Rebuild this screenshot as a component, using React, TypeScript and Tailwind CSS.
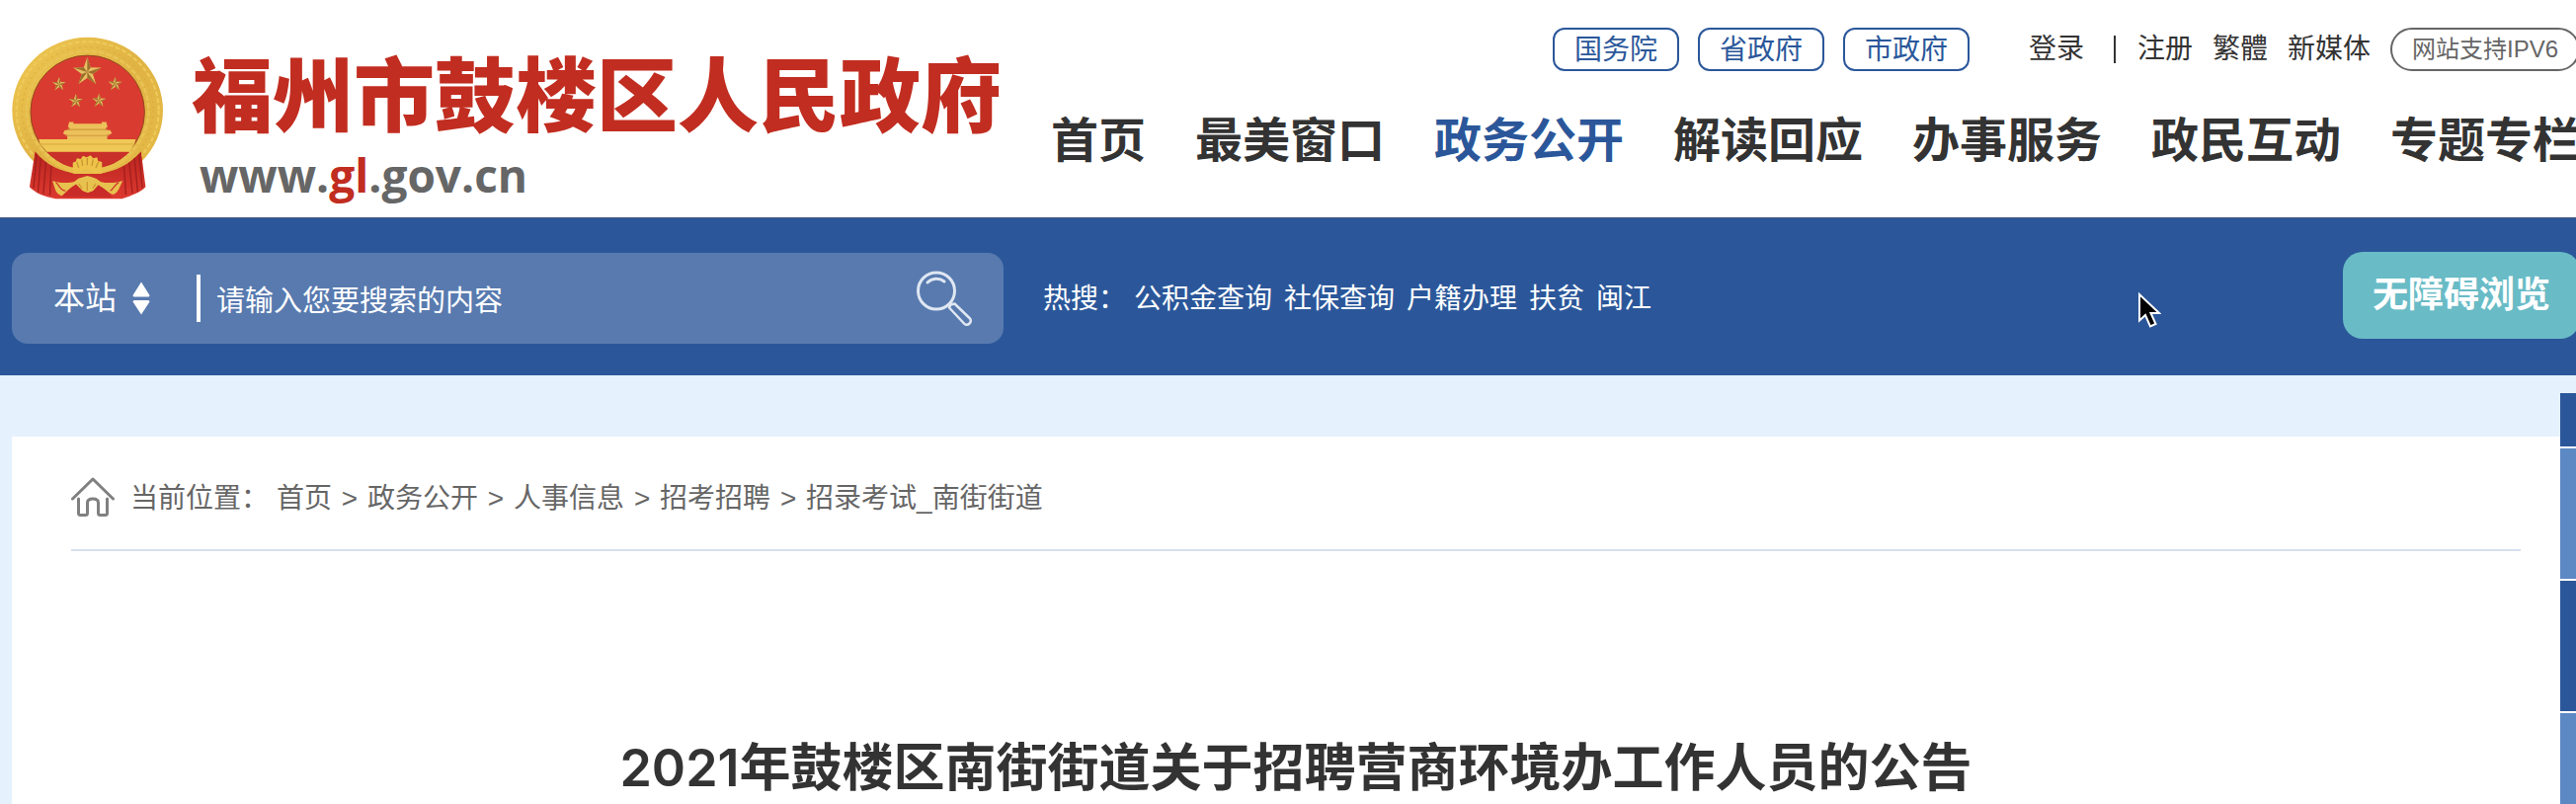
import React from "react";

const starPath = (cx: number, cy: number, r: number) =>
  Array.from({ length: 10 }, (_, i) => {
    const radius = i % 2 === 0 ? r : r * 0.4;
    const angle = -Math.PI / 2 + (i * Math.PI) / 5;
    return `${i === 0 ? "M" : "L"}${(cx + radius * Math.cos(angle)).toFixed(1)} ${(cy + radius * Math.sin(angle)).toFixed(1)}`;
  }).join("") + "Z";

const starShade = (cx: number, cy: number, r: number) =>
  Array.from({ length: 5 }, (_, i) => {
    const a = -Math.PI / 2 + (i * 2 * Math.PI) / 5;
    const b = a + Math.PI / 5;
    return `M${cx} ${cy}L${cx + r * Math.cos(a)} ${cy + r * Math.sin(a)}L${cx + r * 0.4 * Math.cos(b)} ${cy + r * 0.4 * Math.sin(b)}Z`;
  }).join("");

const stars: [number, number, number][] = [
  [266, 160, 45],
  [180, 197, 22],
  [351, 196, 22],
  [231, 248, 22],
  [302, 247, 22],
];

function Emblem() {
  return (
    <svg viewBox="36 52 464 496" className="h-[165px] w-[154px] shrink-0" aria-hidden="true">
      <defs>
        <linearGradient id="gold" x1="0" y1="0" x2="1" y2="1">
          <stop offset="0" stopColor="#efc850" />
          <stop offset="0.5" stopColor="#e0b344" />
          <stop offset="1" stopColor="#e6bb46" />
        </linearGradient>
        <linearGradient id="drape" x1="0" y1="0" x2="0" y2="1">
          <stop offset="0" stopColor="#b92320" />
          <stop offset="1" stopColor="#dd3a30" />
        </linearGradient>
      </defs>
      <ellipse cx="267" cy="277" rx="230" ry="223" fill="url(#gold)" />
      <ellipse cx="267" cy="277" rx="217" ry="210" fill="none" stroke="#efcb5c" strokeWidth="6" strokeDasharray="14 7" />
      <ellipse cx="267" cy="277" rx="200" ry="194" fill="none" stroke="#d6a83e" strokeWidth="3" strokeDasharray="6 12" />
      <ellipse cx="267" cy="277" rx="186" ry="181" fill="none" stroke="#e9c355" strokeWidth="8" strokeDasharray="18 5" />
      <ellipse cx="267" cy="282" rx="174" ry="173" fill="#da3b30" stroke="#8f4a1c" strokeWidth="3" />
      {stars.map(([x, y, r]) => (
        <g key={`${x}-${y}`}>
          <path d={starPath(x, y, r)} fill="#e6bf62" />
          <path d={starShade(x, y, r)} fill="#9c6f2c" />
        </g>
      ))}
      <path d="M211 312h13v5h86v-5h14l4 16-6 3v6h14l5 10-8 4h-6v14h-122v-14h-6l-7-4 6-10h14v-6l-5-3z" fill="#ecc05a" />
      <path d="M205 333h122v4H205zM200 352h132v3H200z" fill="#cf9a3c" />
      <path d="M118 365h296l-4 14-15 24H143l-21-24z" fill="#efc856" />
      <path d="M121 378h288v3H121z" fill="#d5a540" />
      <path d="M143 404h252c-30 28-60 44-90 52h-76c-32-9-60-25-86-52z" fill="#c9302a" />
      <path d="M107 402c32 40 74 62 130 68h60c58-6 100-30 133-68l14 108c-16 16-40 26-72 36H170c-38-6-62-18-80-36z" fill="url(#drape)" />
      <path
        d="M112 410l-10 104M124 422l-8 104M140 434l-8 98M156 446l-4 90M424 410l10 104M410 422l10 104M394 436l10 94M378 446l6 88"
        stroke="#a31f1c"
        strokeWidth="4"
        fill="none"
      />
      <path d="M125 402c26 34 60 56 102 68h80c44-12 78-36 104-68-30 26-66 42-106 50h-78c-40-8-74-24-102-50z" fill="#e9bf4c" />
      <path
        d="M222 462v-26l10-4 2-9 12 2 7-10 11 5 12-6 8 9 12-3 3 11 12 3v28l-22 6-12-9-14-4-12 4-10 9z"
        fill="#edc34a"
      />
      <path d="M240 452l-6-18M252 446l-3-20M266 444v-22M280 446l4-20M292 452l8-18" stroke="#c9962f" strokeWidth="4" />
      <path d="M160 492c30 8 52 6 66 2l14-10 14-4 12-4 14 4 14 5 14 10c20 4 42 4 66-4l-10 22c-6 12-12 20-22 20-18-12-34-24-44-26l-14 16-18 6-16-6-18-14c-12 4-26 16-44 28-12-4-16-10-20-20z" fill="#e8c24f" />
      <path d="M170 496c12 10 14 26 30 26M362 496c-14 8-18 24-26 26" stroke="#d0392d" strokeWidth="4" fill="none" />
      <path d="M190 540c10-16 26-28 42-38l20 20 16 6 16-6 16-18c18 10 32 24 42 38z" fill="#c92c28" />
      <path d="M240 500l10 14M266 494v28M292 500l-9 14" stroke="#cf9a30" strokeWidth="4" />
    </svg>
  );
}

function SearchIcon() {
  return (
    <svg viewBox="0 0 56 56" className="size-14" fill="none" stroke="#dfe7f2" strokeWidth="3" aria-hidden="true">
      <circle cx="20" cy="20.500" r="18.500" />
      <path d="M11 12a13 13 0 0 1 17-1" strokeLinecap="round" />
      <path d="M34.500 34.500l-1.500 3 15.500 16.500c3.500 2.500 8-2 5.500-5.500L38.500 33.500z" strokeLinejoin="round" strokeWidth="2.500" />
    </svg>
  );
}

function HomeIcon() {
  return (
    <svg viewBox="0 0 44 40" className="h-10 w-11 shrink-0" fill="none" stroke="#808080" strokeWidth="3" strokeLinejoin="round" strokeLinecap="round" aria-hidden="true">
      <path d="M1.500 22L22 2l20.500 20" />
      <path d="M7.500 22v14.500q0 2 2 2h5q2 0 2-2V26q0-4 5.500-4t5.500 4v10.500q0 2 2 2h5q2 0 2-2V22" />
    </svg>
  );
}

function Pointer() {
  return (
    <svg viewBox="0 0 24 38" className="absolute left-[2164px] top-[295px] h-[38px] w-6" aria-hidden="true">
      <path d="M2 3v26.500l6-5.500 5 11.500 5.500-2.500-5-11H22z" fill="#000" stroke="#fff" strokeWidth="2" />
    </svg>
  );
}

const governments = ["国务院", "省政府", "市政府"];
const menu = ["首页", "最美窗口", "政务公开", "解读回应", "办事服务", "政民互动", "专题专栏"];
const hotWords = ["公积金查询", "社保查询", "户籍办理", "扶贫", "闽江"];
const crumbs = ["首页", "政务公开", "人事信息", "招考招聘", "招录考试_南街街道"];

export default function App() {
  return (
    <div className="relative min-h-screen overflow-hidden bg-[#e6f1fe] font-['Liberation_Sans','Noto_Sans_CJK_SC',sans-serif] text-[28px] leading-10 text-[#333]">
      <header className="-mr-1 flex h-[220px] justify-between bg-white pl-3">
        <a href="#home" className="flex pt-[37px]">
          <Emblem />
          <span className="ml-7 flex flex-col">
            <span className="whitespace-nowrap font-['Noto_Sans_CJK_SC',sans-serif] text-[82px] font-black leading-[110px] text-[#c12d20]">
              福州市鼓楼区人民政府
            </span>
            <span className="pl-2 font-['Open_Sans',sans-serif] text-[46px] font-bold leading-[60px] text-[#666]">
              www.<span className="text-[#c12d20]">gl</span>.gov.cn
            </span>
          </span>
        </a>
        <div className="flex shrink-0 flex-col items-end pt-7">
          <div className="flex items-center whitespace-nowrap">
            <div className="flex gap-[19px]">
              {governments.map((name) => (
                <a key={name} href="#gov" className="flex h-11 w-32 items-center justify-center rounded-xl border-2 border-[#2b579a] pt-0.5 text-[#2b579a]">
                  {name}
                </a>
              ))}
            </div>
            <a href="#login" className="ml-[60px]">登录</a>
            <span className="mx-[30px] h-7 w-0.5 bg-[#333]" />
            <a href="#register" className="-ml-2">注册</a>
            <a href="#traditional" className="ml-5">繁體</a>
            <a href="#media" className="ml-5">新媒体</a>
            <a href="#ipv6" className="ml-5 flex h-11 w-48 items-center rounded-full border-2 border-[#666] pl-5 text-2xl text-[#666]">
              网站支持IPV6
            </a>
          </div>
          <nav className="mt-[35px] flex gap-[50px] whitespace-nowrap text-5xl font-bold leading-[72px]">
            {menu.map((item) => (
              <a key={item} href="#menu" className={item === "政务公开" ? "text-[#2b579a]" : ""}>
                {item}
              </a>
            ))}
          </nav>
        </div>
      </header>

      <section className="-mr-1 flex h-40 items-center border-t border-[#44597f] bg-[#2b579a] pl-3 text-white">
        <form className="mt-0.5 flex h-[92px] w-[1004px] items-center rounded-2xl bg-[#587aaf] pl-[42px] pr-8" onSubmit={(e) => e.preventDefault()}>
          <select aria-label="搜索范围" className="w-[70px] appearance-none bg-transparent text-[32px] leading-10 outline-none">
            <option>本站</option>
          </select>
          <svg viewBox="0 0 18 34" className="ml-[10px] h-[34px] w-[18px]" fill="#fff" aria-hidden="true">
            <path d="M9 0.500L17.500 14q0 1.500-1.500 1.500H2Q0.500 15.500 0.500 14zM9 33.500L17.500 20.500q0-1.500-1.500-1.500H2q-1.500 0-1.500 1.500z" />
          </svg>
          <span className="ml-[47px] h-12 w-1 bg-white" />
          <input
            aria-label="搜索内容"
            placeholder="请输入您要搜索的内容"
            className="ml-4 min-w-0 flex-1 bg-transparent pt-1.5 text-[29px] leading-10 outline-none placeholder:text-white placeholder:opacity-100"
          />
          <button type="submit" aria-label="搜索">
            <SearchIcon />
          </button>
        </form>
        <p className="ml-10 mt-1 whitespace-nowrap">热搜：</p>
        <div className="ml-2 mt-1 flex gap-3 whitespace-nowrap">
          {hotWords.map((word) => (
            <a key={word} href="#hot">{word}</a>
          ))}
        </div>
        <button className="mb-1 ml-auto h-[88px] w-60 rounded-[20px] bg-[#69bbc6] text-4xl font-bold">无障碍浏览</button>
      </section>

      <main className="-mr-1 ml-3 mt-[62px] min-h-[372px] bg-white px-[60px]">
        <nav className="flex h-[116px] items-center border-b-2 border-[#d5e0ef] pt-2 text-[#666]">
          <HomeIcon />
          <span className="ml-4 mt-1 whitespace-nowrap">当前位置：</span>
          <ol className="ml-2 mt-1 flex whitespace-nowrap">
            {crumbs.map((crumb, i) => (
              <li key={crumb} className="flex">
                {i > 0 && <span className="w-9 text-center">&gt;</span>}
                <a href="#crumb">{crumb}</a>
              </li>
            ))}
          </ol>
        </nav>
        <h1 className="pt-[184px] text-center text-[52px] font-bold leading-[72px]">
          <span className="font-['Inter',sans-serif] font-semibold">2021</span>年鼓楼区南街街道关于招聘营商环境办工作人员的公告
        </h1>
      </main>

      <aside aria-label="快捷工具" className="absolute right-0 top-[398px] flex w-4 flex-col gap-0.5 bg-white">
        <div className="h-[54px] bg-[#2b579a]" />
        <div className="h-[132px] bg-[#5c89c4]" />
        <div className="h-[132px] bg-[#2b579a]" />
        <div className="h-[132px] bg-[#5c89c4]" />
      </aside>
      <Pointer />
    </div>
  );
}
